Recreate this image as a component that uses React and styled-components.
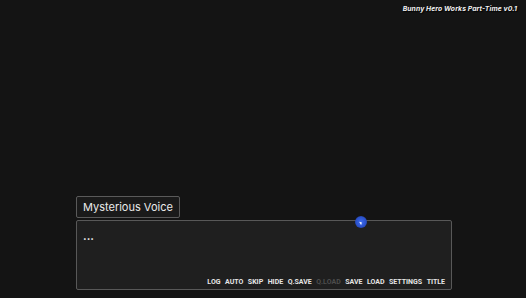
import styled, { createGlobalStyle } from "styled-components";

const Global = createGlobalStyle`
  html, body {
    margin: 0;
    padding: 0;
    background: #141414;
    overflow: hidden;
  }
  #root {
    height: 100vh;
  }
`;

const Screen = styled.div`
  position: relative;
  height: 100%;
  display: flex;
  flex-direction: column;
  justify-content: space-between;
  padding: 4px 9px 8px 76px;
  box-sizing: border-box;
  font-family: "Inter", "Noto Sans", sans-serif;
`;

const Version = styled.div`
  align-self: flex-end;
  color: #f2f2f2;
  font-size: 6.8px;
  font-weight: 700;
  font-style: italic;
  letter-spacing: 0.1px;
  text-shadow: 1px 1px 1px #000;
`;

const Dialogue = styled.div`
  display: flex;
  flex-direction: column;
  align-items: flex-start;
  gap: 2px;
  width: 376px;
`;

const NameBox = styled.div`
  height: 22px;
  box-sizing: border-box;
  padding: 0 6px;
  display: flex;
  align-items: center;
  border: 1px solid #5a5a5a;
  border-radius: 2px;
  background: #1a1a1a;
  color: #eaeaea;
  font-size: 11px;
`;

const TextBox = styled.div`
  width: 100%;
  height: 70px;
  box-sizing: border-box;
  border: 1px solid #585858;
  border-radius: 2px;
  background: #1f1f1f;
  display: flex;
  flex-direction: column;
  justify-content: space-between;
  padding: 10px 6px 3px 6px;
`;

const Line = styled.div`
  color: #f4f4f4;
  font-size: 11px;
  font-weight: 700;
  line-height: 10px;
`;

const Menu = styled.div`
  align-self: flex-end;
  display: flex;
  gap: 4.5px;
`;

const MenuItem = styled.span`
  font-family: "Roboto", "Liberation Sans", sans-serif;
  font-size: 7px;
  font-weight: 700;
  color: ${(p) => (p.$disabled ? "#4d4d4d" : "#e6e6e6")};
`;

const Cursor = styled.div`
  position: absolute;
  left: 355px;
  top: 216px;
  width: 12px;
  height: 12px;
  border-radius: 50%;
  background: radial-gradient(circle, #3d6cf0 0%, #2a50c8 60%, rgba(30, 60, 180, 0.3) 100%);
  &::after {
    content: "";
    position: absolute;
    left: 5px;
    top: 5px;
    border-left: 2px solid #fff;
    border-top: 2px solid transparent;
    border-bottom: 2px solid transparent;
    transform: rotate(-30deg);
  }
`;

const items = ["LOG", "AUTO", "SKIP", "HIDE", "Q.SAVE", "Q.LOAD", "SAVE", "LOAD", "SETTINGS", "TITLE"];

export default function App() {
  return (
    <>
      <Global />
      <Screen>
        <Version>Bunny Hero Works Part-Time v0.1</Version>
        <Dialogue>
          <NameBox>Mysterious Voice</NameBox>
          <TextBox>
            <Line>...</Line>
            <Menu>
              {items.map((t) => (
                <MenuItem key={t} $disabled={t === "Q.LOAD"}>
                  {t}
                </MenuItem>
              ))}
            </Menu>
          </TextBox>
        </Dialogue>
        <Cursor />
      </Screen>
    </>
  );
}
